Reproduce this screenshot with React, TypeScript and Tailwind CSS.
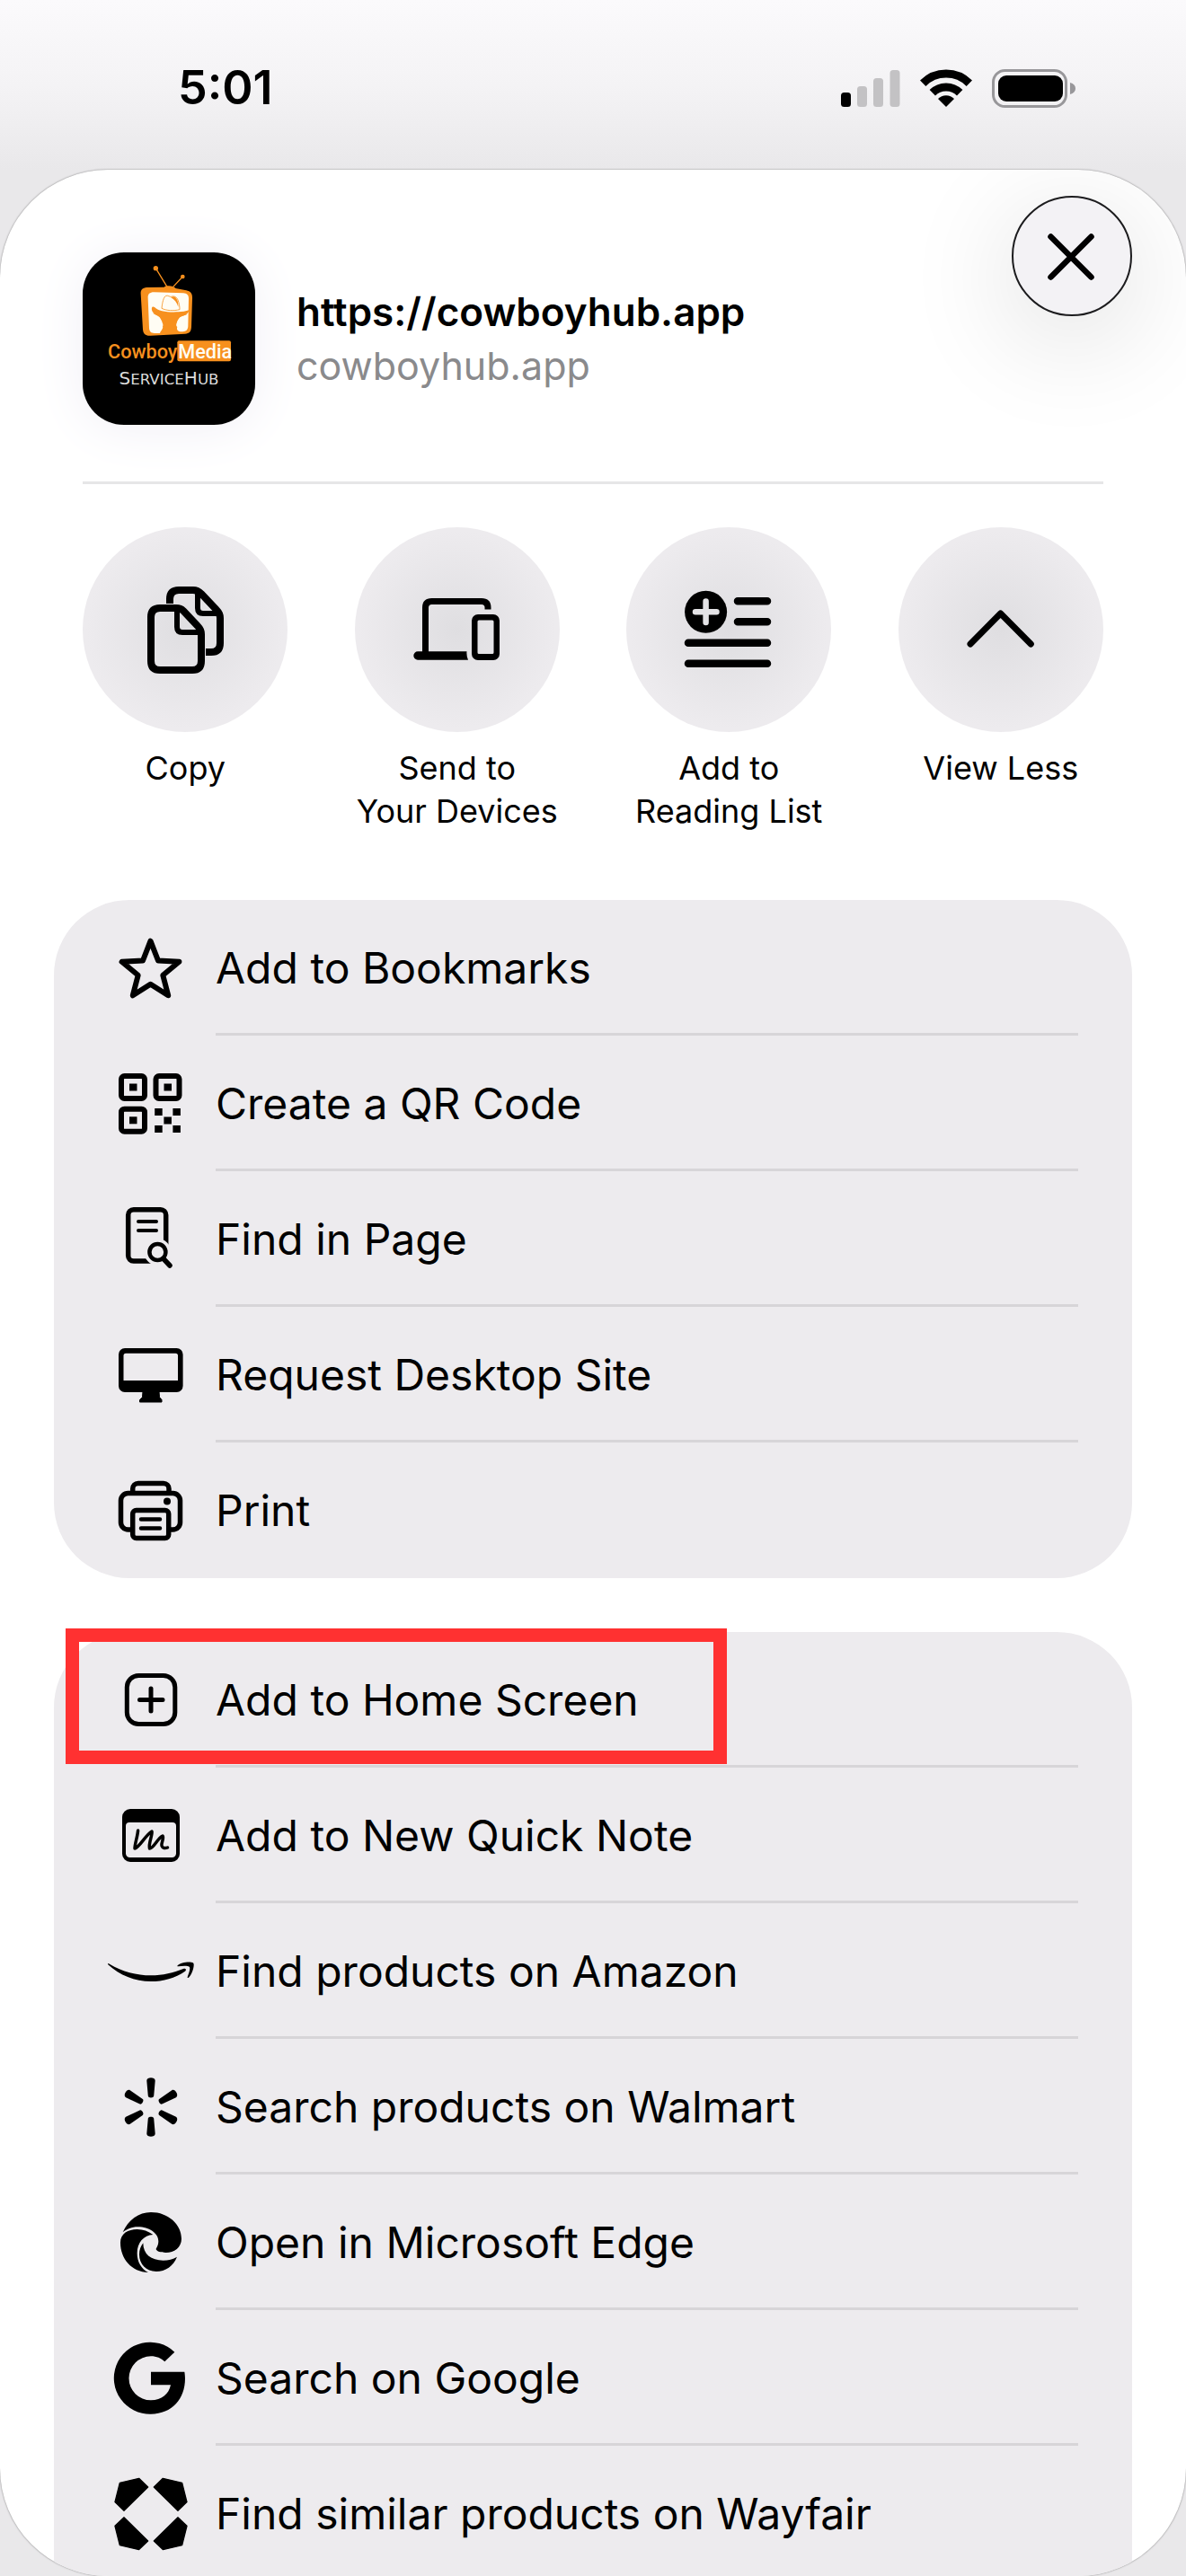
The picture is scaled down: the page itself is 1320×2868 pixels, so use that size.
import type { ReactNode } from "react";

type Item = {
  label: string;
  icon: ReactNode;
  highlighted?: boolean;
};

const StarIcon = () => (
  <path
    d="M59.5 30.7 68 52.5 91.4 53.8 73.3 68.7 79.2 91.3 59.5 78.7 39.8 91.3 45.7 68.7 27.6 53.8 51 52.5Z"
    fill="none"
    stroke="black"
    strokeWidth="6"
    strokeLinejoin="round"
  />
);

const QrIcon = () => (
  <>
    <g fill="none" stroke="black" strokeWidth="6">
      <rect x="27" y="30" width="26" height="25" rx="3.5" />
      <rect x="65.5" y="30" width="26" height="25" rx="3.5" />
      <rect x="27" y="66.7" width="26" height="25" rx="3.5" />
    </g>
    <rect x="36" y="38.5" width="8.5" height="8" />
    <rect x="74.5" y="38.5" width="8.5" height="8" />
    <rect x="36" y="75.3" width="8.5" height="8" />
    <rect x="64.2" y="66" width="8.5" height="8" />
    <rect x="84.4" y="66" width="8.5" height="8" />
    <rect x="74.4" y="75.5" width="8.5" height="8" />
    <rect x="64.2" y="85" width="8.5" height="8" />
    <rect x="84.4" y="85" width="8.5" height="8" />
  </>
);

const FindIcon = () => (
  <g fill="none" stroke="black" strokeLinecap="round">
    <rect x="34.7" y="27.7" width="42" height="57.3" rx="6" strokeWidth="5.5" />
    <path d="M46 41H66M46 51H66" strokeWidth="4" />
    <circle cx="67.4" cy="75" r="9" stroke="#edebee" strokeWidth="12" fill="#edebee" />
    <path d="M74 82 80 89" stroke="#edebee" strokeWidth="11" />
    <circle cx="67.4" cy="75" r="9" strokeWidth="4.5" />
    <path d="M74 82.5 81 90" strokeWidth="5.5" />
  </g>
);

const DesktopIcon = () => (
  <>
    <path
      fillRule="evenodd"
      d="M31 31H88.600a7 7 0 0 1 7 7V73a7 7 0 0 1-7 7H31a7 7 0 0 1-7-7V38a7 7 0 0 1 7-7ZM32 36.700a2.500 2.500 0 0 0-2.500 2.500V67H90V39.200a2.500 2.500 0 0 0-2.500-2.500Z"
    />
    <path d="M51 79H69L69.500 85.500 72 88.500V91H47.500V88.500L50.500 85.500Z" stroke="black" strokeLinejoin="round" />
  </>
);

const PrintIcon = () => (
  <g fill="none" stroke="black" strokeWidth="5.500" strokeLinecap="round" strokeLinejoin="round">
    <path d="M39.700 41V36.500a6 6 0 0 1 6-6H74a6 6 0 0 1 6 6V41" />
    <path d="M38 82H34.500a8 8 0 0 1-8-8V49.500a8 8 0 0 1 8-8H84.500a8 8 0 0 1 8 8V74a8 8 0 0 1-8 8H82" />
    <rect x="39.700" y="60.500" width="40" height="31" rx="4" />
    <path d="M49 70.500H70M49 80.500H70" strokeWidth="4.500" />
    <circle cx="78" cy="50.500" r="4" fill="black" stroke="none" />
  </g>
);

const HomeIcon = () => (
  <g fill="none" stroke="black" strokeWidth="5" strokeLinecap="round">
    <rect x="33.300" y="33.500" width="53.500" height="54" rx="13" />
    <path d="M60 48V73M47.500 60.500H73" />
  </g>
);

const NoteIcon = () => (
  <>
    <path
      fillRule="evenodd"
      d="M37 31H83a9 9 0 0 1 9 9V81a9 9 0 0 1-9 9H37a9 9 0 0 1-9-9V40a9 9 0 0 1 9-9ZM36 46a4 4 0 0 0-4 4V80.500a4.500 4.500 0 0 0 4.500 4.500H83.500a4.500 4.500 0 0 0 4.500-4.500V50a4 4 0 0 0-4-4Z"
    />
    <path
      d="M45.600 55C45 62 42 70 42 75 47 74 54 60 61 56 62 60 57 69 58.500 75 63 75 67 64 73 61 75 64 71 69 72 72 73 75 76 75 78.500 74"
      fill="none"
      stroke="black"
      strokeWidth="3.500"
      strokeLinecap="round"
      strokeLinejoin="round"
    />
  </>
);

const AmazonIcon = () => (
  <>
    <path d="M12 52.300C12.300 51.800 13 52 14 52.700C28 61 44 65.300 60 65.300C73 65.300 85 62.500 96 58C98.500 57 100 59.200 98 60.700C87 68.500 73.500 72 60 72C42 72 25 65 12.500 53.500Z" />
    <path d="M89.500 54.500C92.500 51.500 100 50 105 50.800C107 51 107.700 51.500 107.700 53.500C107.700 58 105 65 102 67.700C101.200 68.400 100.300 68 100.700 67C102 63.500 104 58 103 56C102 54.300 95 54.500 90.500 55.300C89.300 55.500 89 55 89.500 54.500Z" />
  </>
);

const WalmartIcon = () => (
  <>
    {[0, 60, 120, 180, 240, 300].map((angle) => (
      <path
        key={angle}
        d="M55.300 31.500C55.300 27.200 64.700 27.200 64.700 31.500L63.200 48.500C63 51 57 51 56.800 48.500Z"
        transform={`rotate(${angle} 60 61)`}
      />
    ))}
  </>
);

const EdgeIcon = () => (
  <g transform="translate(-58 -6) scale(.3333)">
    <path d="M260 166C278 125 313 99 354 99C412 99 456 140 456 188C456 216 432 234 404 234C386 234 374 230 371 223C371 219 379 212 379 196C379 170 350 148 310 148C290 148 272 156 260 166Z" />
    <path d="M252 200C252 170 278 156 308 156C328 156 345 163 361 174C330 176 308 200 308 236C308 265 322 288 345 300C290 298 252 255 252 200Z" />
    <path d="M328 202C328 240 355 260 395 260C412 260 428 256 441 248C430 278 402 297 372 297C338 297 315 272 315 240C315 225 320 212 328 202Z" />
  </g>
);

const GoogleIcon = () => (
  <g transform="translate(-58 -157) scale(.3333)">
    <path d="M433 566A120 120 0 1 0 354 773C425 773 468 722 468 655C468 646 467 638 466 632H354V676H420C414 706 390 727 354 727A73.500 73.500 0 1 1 354 580C373 580 388 587 400 598Z" />
  </g>
);

const WayfairIcon = () => (
  <g transform="translate(-58 -308) scale(.3333)" stroke="black" strokeWidth="4" strokeLinejoin="round">
    <path d="M314 988 344 1017 264 1096 234 1067 250 1003Z" />
    <path d="M394 988 364 1017 444 1096 474 1067 458 1003Z" />
    <path d="M314 1226 344 1197 264 1118 234 1147 250 1211Z" />
    <path d="M394 1226 364 1197 444 1118 474 1147 458 1211Z" />
  </g>
);

const pageItems: Item[] = [
  { label: "Add to Bookmarks", icon: <StarIcon /> },
  { label: "Create a QR Code", icon: <QrIcon /> },
  { label: "Find in Page", icon: <FindIcon /> },
  { label: "Request Desktop Site", icon: <DesktopIcon /> },
  { label: "Print", icon: <PrintIcon /> },
];

const appItems: Item[] = [
  { label: "Add to Home Screen", icon: <HomeIcon />, highlighted: true },
  { label: "Add to New Quick Note", icon: <NoteIcon /> },
  { label: "Find products on Amazon", icon: <AmazonIcon /> },
  { label: "Search products on Walmart", icon: <WalmartIcon /> },
  { label: "Open in Microsoft Edge", icon: <EdgeIcon /> },
  { label: "Search on Google", icon: <GoogleIcon /> },
  { label: "Find similar products on Wayfair", icon: <WayfairIcon /> },
];

const shortcuts = [
  {
    label: "Copy",
    icon: (
      <g strokeWidth="8">
        <path d="M104 90H86q-10 0-10 10V149q0 10 10 10H122q10 0 10-10V119q0-5-4-9L112 93q-3-3-8-3Z" />
        <path d="M105 91V111q0 6 6 6H131" strokeWidth="6" />
        <path d="M97 85V80q0-10 10-10H123q5 0 9 4L149 92q4 4 4 9V129q0 10-10 10H137" strokeLinecap="butt" />
        <path d="M128 73V90q0 6 6 6H151" strokeWidth="6" />
      </g>
    ),
  },
  {
    label: "Send to\nYour Devices",
    icon: (
      <g strokeWidth="7" strokeLinecap="butt">
        <path d="M78.500 140V89.500q0-7 7-7H141q7 0 7 7V91.500" />
        <path d="M126 147.700H70a4.600 4.600 0 0 1 0-9.400H124.500Q124 143 126 147.700Z" fill="black" stroke="none" />
        <path
          fillRule="evenodd"
          d="M137 97H154a7 7 0 0 1 7 7V141a7 7 0 0 1-7 7H137a7 7 0 0 1-7-7V104a7 7 0 0 1 7-7ZM138 103.500a1.500 1.500 0 0 0-1.500 1.500V139.500a1.500 1.500 0 0 0 1.500 1.500H153a1.500 1.500 0 0 0 1.500-1.500V105a1.500 1.500 0 0 0-1.500-1.500Z"
          fill="black"
          stroke="none"
        />
      </g>
    ),
  },
  {
    label: "Add to\nReading List",
    icon: (
      <g strokeWidth="8.500">
        <circle cx="88.600" cy="94.300" r="23.500" fill="black" stroke="none" />
        <path d="M77 94.300H100.500M88.600 82.500V106" stroke="#e4e3e6" strokeWidth="6.500" />
        <path d="M124 82.300H157M124 105.300H157M69 128.700H157M69 151.700H157" />
      </g>
    ),
  },
  {
    label: "View Less",
    icon: <path d="M80 130 113.600 96 147.300 130" strokeWidth="7" />,
  },
];

const AppLogo = () => (
  <svg viewBox="36 33 576 576" className="size-48 shrink-0 rounded-[46px] bg-black shadow-[0_4px_60px_#f1eff6]">
    <g stroke="#f7901e" strokeWidth="4">
      <path d="M280 86 318 148M370 114 338 148" />
      <circle cx="280" cy="86" r="6" fill="#f7901e" />
      <circle cx="370" cy="114" r="5" fill="#f7901e" />
    </g>
    <path
      fill="#f7901e"
      d="M250 150 308 149C314 143 340 143 346 153L382 160C396 163 403 171 402 186L399 282C398 298 392 304 378 305L262 311C246 312 238 304 237 290L230 172C229 158 236 151 250 150Z"
    />
    <path
      fill="#fffdf4"
      d="M274 166 372 169C384 170 390 175 390 188L388 280C387 292 382 297 370 298H362C352 296 349 288 352 282C345 276 351 270 352 262C353 250 372 244 386 240L270 236C286 244 298 250 300 260C301 268 307 274 303 280C306 288 297 294 294 303H276C264 303 259 298 258 286L254 186C253 172 260 166 274 166Z"
    />
    <path
      fill="#f7901e"
      d="M267 218C264 228 274 240 292 246L300 262H352L362 247C380 245 390 236 391 226C380 230 368 232 356 232C322 234 288 230 276 216C272 213 268 214 267 218Z"
    />
    <path
      fill="#fffdf4"
      stroke="#f7901e"
      strokeWidth="2.500"
      d="M300 220C302 200 306 182 314 178C322 176 326 182 332 181C338 178 350 180 354 192C358 202 360 214 360 224C340 229 316 228 300 220Z"
    />
    <path fill="#f7901e" d="M330 183C342 190 351 200 355 215C356 202 353 188 344 182C340 180 336 181 330 183Z" />
    <rect x="352" y="328" width="179" height="69" rx="6" fill="#f7901e" />
    <g fontFamily="Roboto, sans-serif" fontWeight="500" fontSize="65">
      <text x="120" y="388" fill="#f7901e">
        Cowboy
      </text>
      <text x="355" y="388" fill="#fffdf4">
        Media
      </text>
    </g>
    <text x="324" y="474" textAnchor="middle" fill="#dcdcdc" fontFamily="DejaVu Sans, sans-serif" fontSize="50">
      <tspan fontSize="60">S</tspan>ERVICE<tspan fontSize="60">H</tspan>UB
    </text>
  </svg>
);

const StatusBar = () => (
  <header className="flex h-[189px] shrink-0 items-center justify-between pt-[7px] pr-[123px] pl-[198px]">
    <time className="text-[52px] font-semibold">5:01</time>
    <div className="flex gap-[22px]">
      <svg viewBox="0 0 66 43" className="h-[43px] w-[66px]">
        <rect x="0" y="26" width="11" height="16" rx="3.500" />
        <g fill="#c3c2c4">
          <rect x="18" y="19" width="11" height="23" rx="3.500" />
          <rect x="36" y="10" width="11" height="32" rx="3.500" />
          <rect x="54.500" y="1" width="11" height="41" rx="3.500" />
        </g>
      </svg>
      <svg viewBox="0 0 58 43" className="h-[43px] w-[58px]">
        <g fill="none" stroke="black" strokeWidth="9">
          <path d="M3.200 15.700A36.500 36.500 0 0 1 54.800 15.700" />
          <path d="M13.800 26.300A21.500 21.500 0 0 1 44.200 26.300" />
        </g>
        <path d="M29 42 20 33A12.500 12.500 0 0 1 38 33Z" />
      </svg>
      <svg viewBox="0 0 93 43" className="h-[43px] w-[93px]">
        <rect x="1.500" y="1.500" width="81" height="40" rx="13" fill="none" stroke="#98979a" strokeWidth="3" />
        <rect x="7" y="7" width="72" height="29" rx="9" />
        <path d="M87 15C91 16 93 18.500 93 21.500C93 24.500 91 27 87 28Z" fill="#98979a" />
      </svg>
    </div>
  </header>
);

const Row = ({ label, icon, highlighted }: Item) => (
  <li className="group relative">
    <button type="button" className="flex h-[151px] w-full items-center gap-3 pr-[60px] pl-12 text-left">
      <svg viewBox="0 0 120 121" className="h-[121px] w-[120px] shrink-0">
        {icon}
      </svg>
      <span className="flex h-full flex-1 items-center border-b-[3px] border-[#d7d5d8] pt-1 text-5xl group-last:border-transparent">
        {label}
      </span>
    </button>
    {highlighted && (
      <div className="pointer-events-none absolute -top-1 left-[13px] h-[151px] w-[736px] border-[15px] border-[#ff3131]" />
    )}
  </li>
);

export default function App() {
  return (
    <div className="flex h-screen flex-col overflow-hidden bg-[#e9e8ea] bg-[linear-gradient(#fbfafc,#f4f3f5_95px,#e9e8ea_189px)] font-[Inter,sans-serif] text-black">
      <StatusBar />

      <main className="relative min-h-0 flex-1 overflow-hidden rounded-[120px] bg-white shadow-[0_0_2px_#00000080]">
        <button
          type="button"
          aria-label="Close"
          className="absolute top-[29px] right-[60px] size-[134px] rounded-full border-2 border-[#1c1c1e] bg-[#f3f2f5] shadow-[0_24px_120px_10px_#0000001c]"
        >
          <svg viewBox="0 0 130 130" fill="none" stroke="black" strokeWidth="6.500" strokeLinecap="round">
            <path d="M41.500 43.500 86.500 88.500M86.500 43.500 41.500 88.500" />
          </svg>
        </button>

        <section className="mx-[92px] flex items-center gap-[46px] border-b-[3px] border-[#e6e6e7] pt-[92px] pb-[63px]">
          <AppLogo />
          <div className="leading-[60px]">
            <h1 className="text-[44px] font-semibold">https://cowboyhub.app</h1>
            <p className="text-[43px] text-[#8a8a8c]">cowboyhub.app</p>
          </div>
        </section>

        <div className="mx-[92px] mt-12 grid grid-cols-4 gap-[74px]">
          {shortcuts.map((item) => (
            <button key={item.label} type="button" className="flex flex-col items-center gap-4">
              <svg
                viewBox="0 0 228 228"
                fill="none"
                stroke="black"
                strokeLinecap="round"
                strokeLinejoin="round"
                className="size-[228px] rounded-full bg-[radial-gradient(circle,#dfdee1,#edebee_68%)]"
              >
                {item.icon}
              </svg>
              <span className="text-4xl leading-[48px] whitespace-pre">{item.label}</span>
            </button>
          ))}
        </div>

        <ul className="mx-[60px] mt-[75px] rounded-[84px] bg-[#edebee]">
          {pageItems.map((item) => (
            <Row key={item.label} {...item} />
          ))}
        </ul>

        {/* runs on below the fold, so only the top is rounded */}
        <ul className="mx-[60px] mt-[60px] rounded-t-[84px] bg-[#edebee] pb-20">
          {appItems.map((item) => (
            <Row key={item.label} {...item} />
          ))}
        </ul>
      </main>
    </div>
  );
}
